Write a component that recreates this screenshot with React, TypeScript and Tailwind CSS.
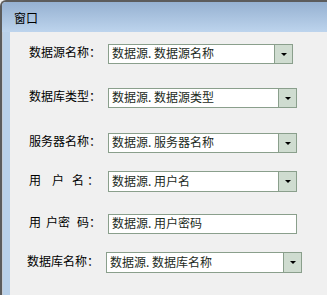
const FONT = 'font-["Noto_Sans_CJK_SC","Noto_Sans",sans-serif]'

type Row = {
  label: React.ReactNode
  value: string
  mt: string
  h: string
  labelW: string
  padL: string
  w: string
  combo: boolean
}

const ROWS: Row[] = [
  { label: '数据源名称：', value: '数据源. 数据源名称', mt: 'mt-[12px]', h: 'h-[20px]', labelW: 'w-[79px]', padL: 'pl-[19px]', w: 'w-[185px]', combo: true },
  { label: '数据库类型：', value: '数据源. 数据源类型', mt: 'mt-[24px]', h: 'h-[20px]', labelW: 'w-[79px]', padL: 'pl-[19px]', w: 'w-[189px]', combo: true },
  { label: '服务器名称：', value: '数据源. 服务器名称', mt: 'mt-[25px]', h: 'h-[20px]', labelW: 'w-[79px]', padL: 'pl-[19px]', w: 'w-[189px]', combo: true },
  {
    label: (
      <>
        <span>用</span>
        <span className="ml-[11px]">户</span>
        <span className="ml-[8px]">名</span>
        <span className="ml-[3px]">：</span>
      </>
    ),
    value: '数据源. 用户名', mt: 'mt-[18px]', h: 'h-[21px]', labelW: 'w-[79px]', padL: 'pl-[19px]', w: 'w-[189px]', combo: true,
  },
  {
    label: (
      <>
        <span>用</span>
        <span className="ml-[5px]">户密</span>
        <span className="ml-[7px]">码：</span>
      </>
    ),
    value: '数据源. 用户密码', mt: 'mt-[22px]', h: 'h-[20px]', labelW: 'w-[79px]', padL: 'pl-[19px]', w: 'w-[189px]', combo: false,
  },
  { label: '数据库名称：', value: '数据源. 数据库名称', mt: 'mt-[18px]', h: 'h-[21px]', labelW: 'w-[79px]', padL: 'pl-[17px]', w: 'w-[196px]', combo: true },
]

function Field({ row }: { row: Row }) {
  return (
    <div className={`flex items-center ${row.mt} ${row.padL}`}>
      <span className={`${row.labelW} shrink-0 flex items-center pb-[4px] text-[12px] leading-none text-black whitespace-nowrap`}>
        {row.label}
      </span>
      <div className={`${row.w} ${row.h} flex border border-[#8a9f8c] bg-white`}>
        <span className="flex-1 flex items-center pl-[3px] pb-[2px] text-[12px] leading-none text-[#1c2a1c] whitespace-nowrap overflow-hidden">
          {row.value}
        </span>
        {row.combo && (
          <span className="w-[18px] shrink-0 flex items-center justify-center border-l border-[#8a9f8c] bg-[#cfdcd0]">
            <span className="w-0 h-0 border-l-[3px] border-r-[3px] border-t-[3px] border-l-transparent border-r-transparent border-t-black" />
          </span>
        )}
      </div>
    </div>
  )
}

export default function App() {
  return (
    <div className={`w-[327px] h-[295px] overflow-hidden bg-[#f0f0f0] ${FONT}`}>
      <div className="w-full h-full flex flex-col border-l-2 border-t-2 border-[#5c5c5c] rounded-tl-[6px] overflow-hidden">
        <div className="h-[30px] shrink-0 flex items-center pl-[12px] pt-[1px] bg-gradient-to-b from-[#96b1d1] to-[#bdd4ed] text-[12px] text-black">
          窗口
        </div>
        <div className="flex-1 flex">
          <div className="w-[8px] shrink-0 border-l border-[#c4ccd6] bg-[#b9d1ea]" />
          <div className="flex-1 flex flex-col bg-[#f0f0f0]">
            {ROWS.map((r, i) => (
              <Field key={i} row={r} />
            ))}
          </div>
        </div>
      </div>
    </div>
  )
}
